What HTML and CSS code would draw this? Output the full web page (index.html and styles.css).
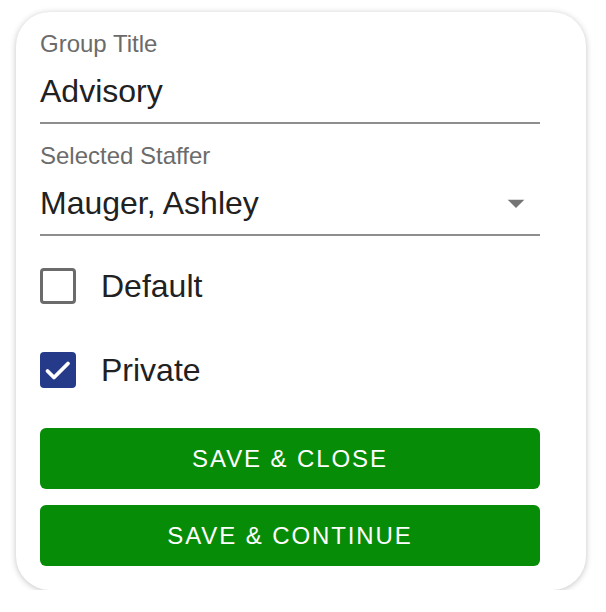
FILE: index.html
```html
<!DOCTYPE html>
<html lang="en">
<head>
    <meta charset="UTF-8">
    <title>Edit Group</title>
    <link rel="stylesheet" href="styles.css">
</head>
<body>
    <div class="group-card">
        <div class="field">
            <label class="field-label" for="groupTitle">Group Title</label>
            <div class="field-input">
                <span id="groupTitle">Advisory</span>
            </div>
        </div>
        <div class="field">
            <label class="field-label" for="staffer">Selected Staffer</label>
            <div class="field-input select">
                <span id="staffer">Mauger, Ashley</span>
                <svg class="arrow" width="40" height="40" viewBox="0 0 24 24"><path d="M7 10l5 5 5-5z" fill="#757575"/></svg>
            </div>
        </div>
        <div class="check-row first">
            <span class="check-box"></span>
            <span class="check-text">Default</span>
        </div>
        <div class="check-row">
            <span class="check-box checked">
                <svg width="36" height="36" viewBox="0 0 36 36"><path d="M7.5 19l6.5 6.5 14-14" fill="none" stroke="#fff" stroke-width="3.8" stroke-linecap="round" stroke-linejoin="round"/></svg>
            </span>
            <span class="check-text">Private</span>
        </div>
        <div class="actions">
            <button class="btn-save">Save &amp; Close</button>
            <button class="btn-save">Save &amp; Continue</button>
        </div>
    </div>
</body>
</html>
```

FILE: styles.css
```css
body {
    margin: 0;
    font-family: "Liberation Sans", Arial, sans-serif;
    background: #fff;
}
.group-card {
    box-sizing: border-box;
    width: 570px;
    height: 578px;
    margin: 12px 0 0 16px;
    padding: 18px 46px 0 24px;
    background: #fff;
    border-radius: 34px;
    box-shadow: 0 1px 6px rgba(0, 0, 0, 0.24);
}
.field + .field {
    margin-top: 18px;
}
.field-label {
    display: block;
    font-size: 24px;
    line-height: 28px;
    color: #6b6b6b;
}
.field-input {
    display: flex;
    align-items: center;
    justify-content: space-between;
    margin-top: 15px;
    padding-bottom: 13px;
    border-bottom: 2px solid #8e8e8e;
    font-size: 32px;
    line-height: 36px;
    color: #212121;
}
.field-input .arrow {
    margin: -2px 4px -2px 0;
}
.check-row {
    display: flex;
    align-items: center;
    gap: 25px;
    margin-top: 48px;
}
.check-row.first {
    margin-top: 32px;
}
.check-box {
    box-sizing: border-box;
    width: 36px;
    height: 36px;
    border: 3.5px solid #6b6b6b;
    border-radius: 4px;
}
.check-box.checked {
    border: none;
    background: #263a8a;
}
.check-box svg {
    display: block;
}
.check-text {
    font-size: 32px;
    line-height: 36px;
    color: #212121;
}
.actions {
    display: flex;
    flex-direction: column;
    gap: 16px;
    margin-top: 40px;
}
.btn-save {
    height: 61px;
    border: none;
    border-radius: 6px;
    background: #078c07;
    color: #fff;
    font-family: inherit;
    font-size: 24px;
    letter-spacing: 1.9px;
    text-transform: uppercase;
}
```
